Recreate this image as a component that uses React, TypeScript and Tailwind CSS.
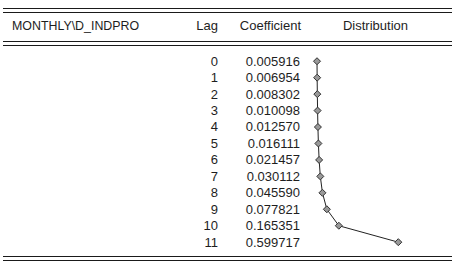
import React from 'react';

const rows = [
  0.005916, 0.006954, 0.008302, 0.010098, 0.01257, 0.016111, 0.021457,
  0.030112, 0.04559, 0.077821, 0.165351, 0.599717,
];

const ROW_H = 16.45;

function DoubleRule() {
  return (
    <div className="flex flex-col gap-[3px]">
      <div className="h-px bg-[#1a1a1a]" />
      <div className="h-px bg-[#1a1a1a]" />
    </div>
  );
}

function Distribution() {
  const h = rows.length * ROW_H;
  const pts = rows.map((c, i) => [15.2 + 136.9 * c, (i + 0.5) * ROW_H]);
  return (
    <svg width={152} height={h} className="block">
      <polyline
        points={pts.map((p) => p.join(',')).join(' ')}
        fill="none"
        stroke="#222"
        strokeWidth={1}
      />
      {pts.map(([x, y], i) => (
        <polygon
          key={i}
          points={`${x},${y - 3.5} ${x + 3.5},${y} ${x},${y + 3.5} ${x - 3.5},${y}`}
          fill="#999"
          stroke="#333"
          strokeWidth={1}
        />
      ))}
    </svg>
  );
}

export default function App() {
  return (
    <div className="w-[458px] h-[266px] bg-white pt-[8px] pl-[3px] font-['Liberation_Sans',Arial,sans-serif] text-[13px] text-[#1e1e1e]">
      <div className="w-[449px]">
        <DoubleRule />
        <div className="grid grid-cols-[182px_33px_83px_151px] h-[28px] items-center pb-[2px]">
          <div className="pl-[9px] text-[12.4px]">MONTHLY\D_INDPRO</div>
          <div className="text-right">Lag</div>
          <div className="text-right">Coefficient</div>
          <div className="text-center pr-[2px]">Distribution</div>
        </div>
        <DoubleRule />
        <div className="flex pt-[7px] pb-[5.6px]">
          <div className="flex flex-col">
            {rows.map((c, i) => (
              <div
                key={i}
                className="grid grid-cols-[182px_33px_82px] items-center leading-none h-[16.45px]"
              >
                <div />
                <div className="text-right">{i}</div>
                <div className="text-right">{c.toFixed(6)}</div>
              </div>
            ))}
          </div>
          <div className="pl-px">
            <Distribution />
          </div>
        </div>
        <DoubleRule />
      </div>
    </div>
  );
}
